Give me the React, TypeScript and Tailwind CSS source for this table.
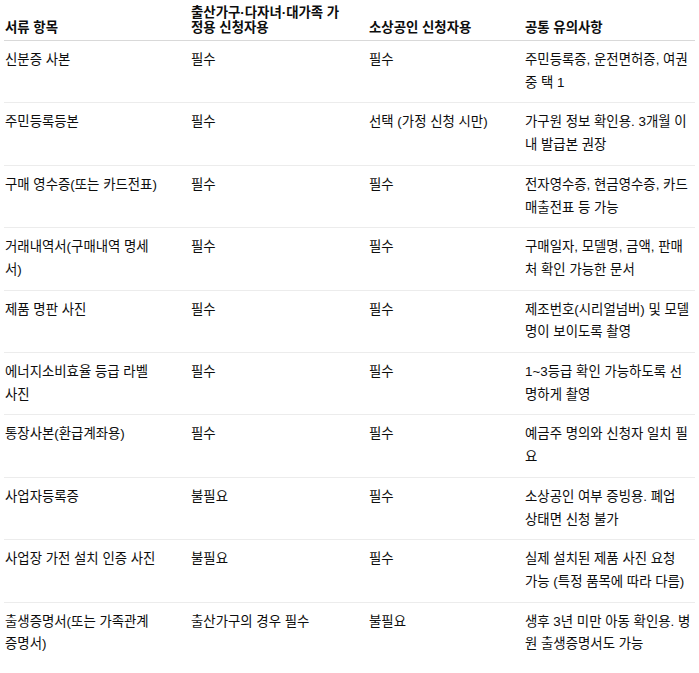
const rows = [
  {
    item: '신분증 사본',
    family: '필수',
    biz: '필수',
    note: '주민등록증, 운전면허증, 여권 중 택 1',
  },
  {
    item: '주민등록등본',
    family: '필수',
    biz: '선택 (가정 신청 시만)',
    note: '가구원 정보 확인용. 3개월 이내 발급본 권장',
  },
  {
    item: '구매 영수증(또는 카드전표)',
    family: '필수',
    biz: '필수',
    note: '전자영수증, 현금영수증, 카드 매출전표 등 가능',
  },
  {
    item: '거래내역서(구매내역 명세서)',
    family: '필수',
    biz: '필수',
    note: '구매일자, 모델명, 금액, 판매처 확인 가능한 문서',
  },
  {
    item: '제품 명판 사진',
    family: '필수',
    biz: '필수',
    note: '제조번호(시리얼넘버) 및 모델명이 보이도록 촬영',
  },
  {
    item: '에너지소비효율 등급 라벨 사진',
    family: '필수',
    biz: '필수',
    note: '1~3등급 확인 가능하도록 선명하게 촬영',
  },
  {
    item: '통장사본(환급계좌용)',
    family: '필수',
    biz: '필수',
    note: '예금주 명의와 신청자 일치 필요',
  },
  {
    item: '사업자등록증',
    family: '불필요',
    biz: '필수',
    note: '소상공인 여부 증빙용. 폐업 상태면 신청 불가',
  },
  {
    item: '사업장 가전 설치 인증 사진',
    family: '불필요',
    biz: '필수',
    note: '실제 설치된 제품 사진 요청 가능 (특정 품목에 따라 다름)',
  },
  {
    item: '출생증명서(또는 가족관계증명서)',
    family: '출산가구의 경우 필수',
    biz: '불필요',
    note: '생후 3년 미만 아동 확인용. 병원 출생증명서도 가능',
  },
];

const cols = 'grid grid-cols-[187px_178px_156px_170px]';

export default function App() {
  return (
    <div
      className="bg-white pl-[4px] text-[13.4px] text-[#0d0d0d]"
      style={{ fontFamily: '"Liberation Sans", "Noto Sans CJK KR", sans-serif' }}
    >
      <div className="w-[691px]">
        {/* Header */}
        <div className={`${cols} items-end border-b border-[#d9d9d9] pt-[5px] pb-[5px] font-bold leading-[15px]`}>
          <div className="pl-[1px] pr-[32px]">서류 항목</div>
          <div className="pr-[28px]">출산가구·다자녀·대가족 가정용 신청자용</div>
          <div className="pr-[20px]">소상공인 신청자용</div>
          <div className="pr-[4px]">공통 유의사항</div>
        </div>

        {/* Rows */}
        {rows.map((r, i) => (
          <div
            key={i}
            className={`${cols} py-2 leading-[22.7px] ${i < rows.length - 1 ? 'border-b border-[#ececec]' : ''}`}
          >
            <div className="pl-[1px] pr-[32px]">{r.item}</div>
            <div className="pr-[28px]">{r.family}</div>
            <div className="pr-[20px]">{r.biz}</div>
            <div className="pr-[4px]">{r.note}</div>
          </div>
        ))}
      </div>
    </div>
  );
}
